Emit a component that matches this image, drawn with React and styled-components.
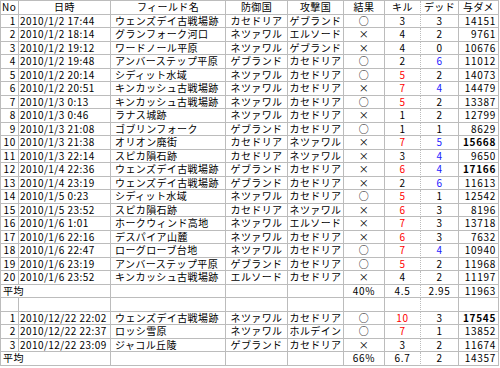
import React from 'react'
import styled, { createGlobalStyle } from 'styled-components'

const GlobalStyle = createGlobalStyle`
  html, body {
    margin: 0;
    padding: 0;
    background: #ffffff;
  }
  body {
    font-family: "Noto Sans CJK JP", "Noto Sans", sans-serif;
    color: #000000;
  }
`

const LINE = '#bcbcbc'

const Sheet = styled.div`
  display: grid;
  grid-template-columns: 18px 92px 115px 62px 56px 41px 36px 38px 40px;
  grid-auto-rows: 13.5px;
  width: max-content;
  border-top: 1px solid ${LINE};
  border-left: 1px solid ${LINE};
  font-size: 10px;
  letter-spacing: 0.4px;
`

const Cell = styled.div`
  box-sizing: border-box;
  grid-column: span ${p => p.$span || 1};
  border-right: 1px ${p => (p.$dotted ? 'dotted' : 'solid')} ${LINE};
  border-bottom: 1px solid ${LINE};
  padding: ${p => p.$pad || '0 2px'};
  display: flex;
  align-items: center;
  justify-content: ${p =>
    p.$align === 'right' ? 'flex-end' : p.$align === 'center' ? 'center' : 'flex-start'};
  color: ${p => p.$color || '#000000'};
  font-weight: ${p => (p.$bold ? 700 : 400)};
  white-space: nowrap;
  line-height: 12px;
  min-width: 0;
`

const Num = styled.span`
  letter-spacing: ${p => p.$tight ? '0.45px' : '0.7px'};
`

const RED = '#ff0000'
const BLUE = '#1a1aff'

const firstRound = [
  [1, '2010/1/2 17:44', 'ウェンズデイ古戦場跡', 'カセドリア', 'ゲブランド', '○', 3, 3, 14151],
  [2, '2010/1/2 18:14', 'グランフォーク河口', 'ネツァワル', 'エルソード', '×', 4, 2, 9761],
  [3, '2010/1/2 19:12', 'ワードノール平原', 'ネツァワル', 'ゲブランド', '×', 4, 0, 10676],
  [4, '2010/1/2 19:48', 'アンバーステップ平原', 'ゲブランド', 'カセドリア', '○', 2, 6, 11012],
  [5, '2010/1/2 20:14', 'シディット水域', 'ネツァワル', 'カセドリア', '○', 5, 2, 14073],
  [6, '2010/1/2 20:51', 'キンカッシュ古戦場跡', 'ネツァワル', 'カセドリア', '×', 7, 4, 14479],
  [7, '2010/1/3 0:13', 'キンカッシュ古戦場跡', 'ネツァワル', 'カセドリア', '○', 5, 2, 13387],
  [8, '2010/1/3 0:46', 'ラナス城跡', 'ネツァワル', 'カセドリア', '×', 1, 2, 12799],
  [9, '2010/1/3 21:08', 'ゴブリンフォーク', 'ゲブランド', 'カセドリア', '○', 1, 1, 8629],
  [10, '2010/1/3 21:38', 'オリオン廃街', 'カセドリア', 'ネツァワル', '×', 7, 5, 15668],
  [11, '2010/1/3 22:14', 'スピカ隕石跡', 'カセドリア', 'ネツァワル', '×', 3, 4, 9650],
  [12, '2010/1/4 22:36', 'ウェンズデイ古戦場跡', 'ゲブランド', 'カセドリア', '×', 6, 4, 17166],
  [13, '2010/1/4 23:19', 'ウェンズデイ古戦場跡', 'ゲブランド', 'カセドリア', '×', 2, 6, 11613],
  [14, '2010/1/5 0:23', 'シディット水域', 'ネツァワル', 'カセドリア', '○', 5, 1, 12542],
  [15, '2010/1/5 23:52', 'スピカ隕石跡', 'カセドリア', 'ネツァワル', '×', 6, 3, 8196],
  [16, '2010/1/6 1:01', 'ホークウィンド高地', 'ネツァワル', 'エルソード', '×', 7, 3, 13718],
  [17, '2010/1/6 22:16', 'デスパイア山麓', 'ネツァワル', 'カセドリア', '×', 6, 3, 7632],
  [18, '2010/1/6 22:47', 'ローグローブ台地', 'ネツァワル', 'カセドリア', '○', 7, 4, 10940],
  [19, '2010/1/6 23:19', 'アンバーステップ平原', 'ゲブランド', 'カセドリア', '○', 5, 2, 11968],
  [20, '2010/1/6 23:52', 'キンカッシュ古戦場跡', 'エルソード', 'カセドリア', '×', 4, 2, 11197],
]

const secondRound = [
  [1, '2010/12/22 22:02', 'ウェンズデイ古戦場跡', 'ネツァワル', 'カセドリア', '○', 10, 3, 17545],
  [2, '2010/12/22 22:37', 'ロッシ雪原', 'ネツァワル', 'ホルデイン', '○', 7, 1, 13852],
  [3, '2010/12/22 23:09', 'ジャコル丘陵', 'ゲブランド', 'カセドリア', '×', 3, 2, 11674],
]

const headers = ['No', '日時', 'フィールド名', '防御国', '攻撃国', '結果', 'キル', 'デッド', '与ダメ']

const MatchRow = ({ row }) => {
  const [no, date, field, def, atk, result, kill, dead, dmg] = row
  return (
    <>
      <Cell $align="right" $pad="0 2px 0 0"><Num>{no}</Num></Cell>
      <Cell $pad="0 1px"><Num $tight>{date}</Num></Cell>
      <Cell $pad="0 4px">{field}</Cell>
      <Cell $align="center">{def}</Cell>
      <Cell $align="center">{atk}</Cell>
      <Cell $align="center">{result}</Cell>
      <Cell $align="center" $dotted $color={kill >= 5 ? RED : undefined}>
        <Num>{kill}</Num>
      </Cell>
      <Cell $align="center" $color={dead >= 4 ? BLUE : undefined}>
        <Num>{dead}</Num>
      </Cell>
      <Cell $align="right" $bold={dmg >= 15000}><Num>{dmg}</Num></Cell>
    </>
  )
}

const AverageRow = ({ rate, kill, dead, dmg }) => (
  <>
    <Cell $span={2}>平均</Cell>
    <Cell />
    <Cell />
    <Cell />
    <Cell $align="center"><Num>{rate}</Num></Cell>
    <Cell $align="center" $dotted><Num>{kill}</Num></Cell>
    <Cell $align="center"><Num>{dead}</Num></Cell>
    <Cell $align="right"><Num>{dmg}</Num></Cell>
  </>
)

const App = () => (
  <>
    <GlobalStyle />
    <Sheet>
      {headers.map((h, i) => (
        <Cell key={h} $align={i === 0 ? 'left' : 'center'} $pad={i === 0 ? '0 1px' : '0'} $dotted={i === 6}>
          {h}
        </Cell>
      ))}
      {firstRound.map(r => <MatchRow key={'a' + r[0]} row={r} />)}
      <AverageRow rate="40%" kill="4.5" dead="2.95" dmg="11963" />
      {headers.map((h, i) => <Cell key={'e' + h} $dotted={i === 6} />)}
      {secondRound.map(r => <MatchRow key={'b' + r[0]} row={r} />)}
      <AverageRow rate="66%" kill="6.7" dead="2" dmg="14357" />
    </Sheet>
  </>
)

export default App
